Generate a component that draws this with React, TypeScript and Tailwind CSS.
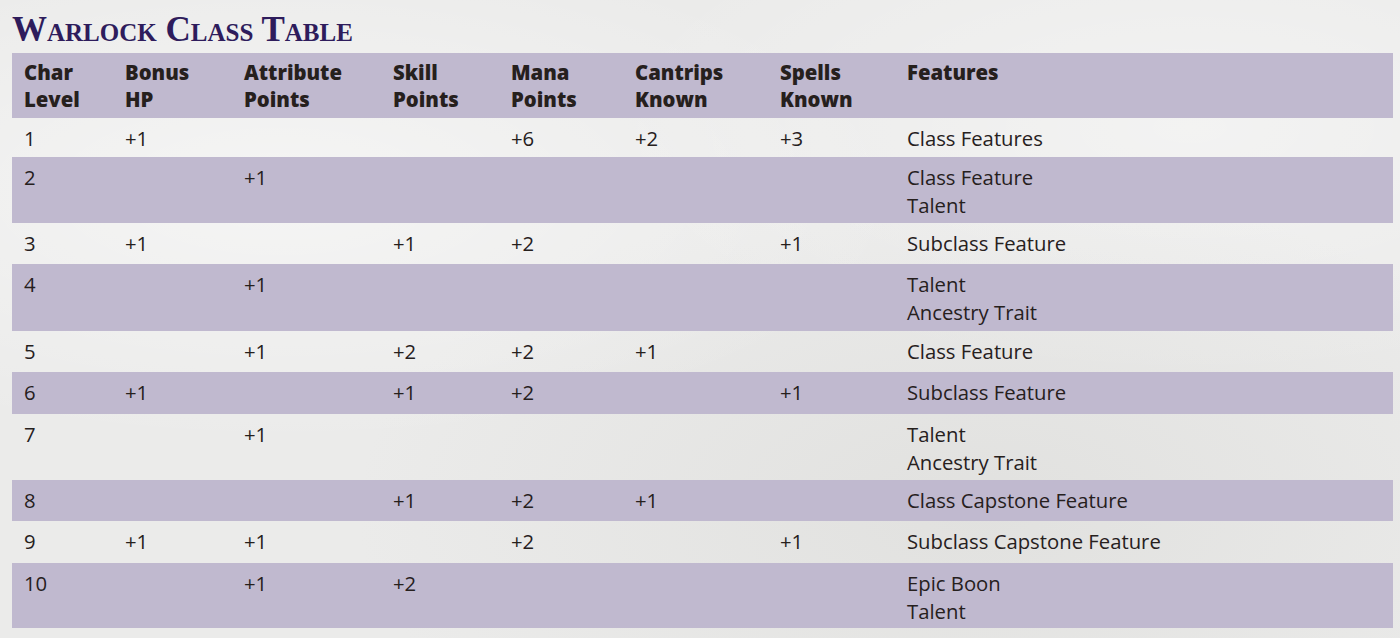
import React from "react";

type Row = { cells: string[]; features: string[]; h: number };

const rows: Row[] = [
  { cells: ["1", "+1", "", "", "+6", "+2", "+3"], features: ["Class Features"], h: 39 },
  { cells: ["2", "", "+1", "", "", "", ""], features: ["Class Feature", "Talent"], h: 66 },
  { cells: ["3", "+1", "", "+1", "+2", "", "+1"], features: ["Subclass Feature"], h: 41 },
  { cells: ["4", "", "+1", "", "", "", ""], features: ["Talent", "Ancestry Trait"], h: 67 },
  { cells: ["5", "", "+1", "+2", "+2", "+1", ""], features: ["Class Feature"], h: 41 },
  { cells: ["6", "+1", "", "+1", "+2", "", "+1"], features: ["Subclass Feature"], h: 42 },
  { cells: ["7", "", "+1", "", "", "", ""], features: ["Talent", "Ancestry Trait"], h: 66 },
  { cells: ["8", "", "", "+1", "+2", "+1", ""], features: ["Class Capstone Feature"], h: 41 },
  { cells: ["9", "+1", "+1", "", "+2", "", "+1"], features: ["Subclass Capstone Feature"], h: 42 },
  { cells: ["10", "", "+1", "+2", "", "", ""], features: ["Epic Boon", "Talent"], h: 65 },
];

const headers: [string, string][] = [
  ["Char", "Level"],
  ["Bonus", "HP"],
  ["Attribute", "Points"],
  ["Skill", "Points"],
  ["Mana", "Points"],
  ["Cantrips", "Known"],
  ["Spells", "Known"],
  ["Features", ""],
];

const widths = ["w-[101px]", "w-[119px]", "w-[149px]", "w-[118px]", "w-[124px]", "w-[145px]", "w-[127px]", "flex-1"];

export default function App() {
  return (
    <div
      className="w-[1400px] h-[638px] overflow-hidden bg-[#ebebea] px-[12px] pt-[10px]"
      style={{
        backgroundImage:
          "radial-gradient(ellipse at 20% 30%, rgba(255,255,255,0.5), transparent 40%), radial-gradient(ellipse at 70% 80%, rgba(215,215,212,0.5), transparent 45%), radial-gradient(ellipse at 85% 20%, rgba(255,255,255,0.4), transparent 35%)",
      }}
    >
      <h1
        className="text-[#2e1c5c] font-bold text-[35px] leading-[40px] [font-variant:small-caps] h-[43px]"
        style={{ fontFamily: '"Liberation Serif", "DejaVu Serif", serif' }}
      >
        Warlock Class Table
      </h1>
      <div
        className="w-[1381px] text-[#26201d] text-[20.3px]"
        style={{ fontFamily: '"Open Sans", "Noto Sans", sans-serif' }}
      >
        <div className="flex bg-[#c0b9cf] h-[65px] pt-[6px] font-extrabold leading-[27px]">
          {headers.map((h, i) => (
            <div key={i} className={`${widths[i]} pl-[12px]`}>
              <div>{h[0]}</div>
              <div>{h[1]}</div>
            </div>
          ))}
        </div>
        {rows.map((r, ri) => (
          <div
            key={ri}
            className={`flex leading-[28px] py-[6px] ${ri % 2 === 1 ? "bg-[#c0b9cf]" : ""}`}
            style={{ height: r.h }}
          >
            {r.cells.map((c, ci) => (
              <div key={ci} className={`${widths[ci]} pl-[12px]`}>
                {c}
              </div>
            ))}
            <div className={`${widths[7]} pl-[12px]`}>
              {r.features.map((f, fi) => (
                <div key={fi}>{f}</div>
              ))}
            </div>
          </div>
        ))}
      </div>
    </div>
  );
}
